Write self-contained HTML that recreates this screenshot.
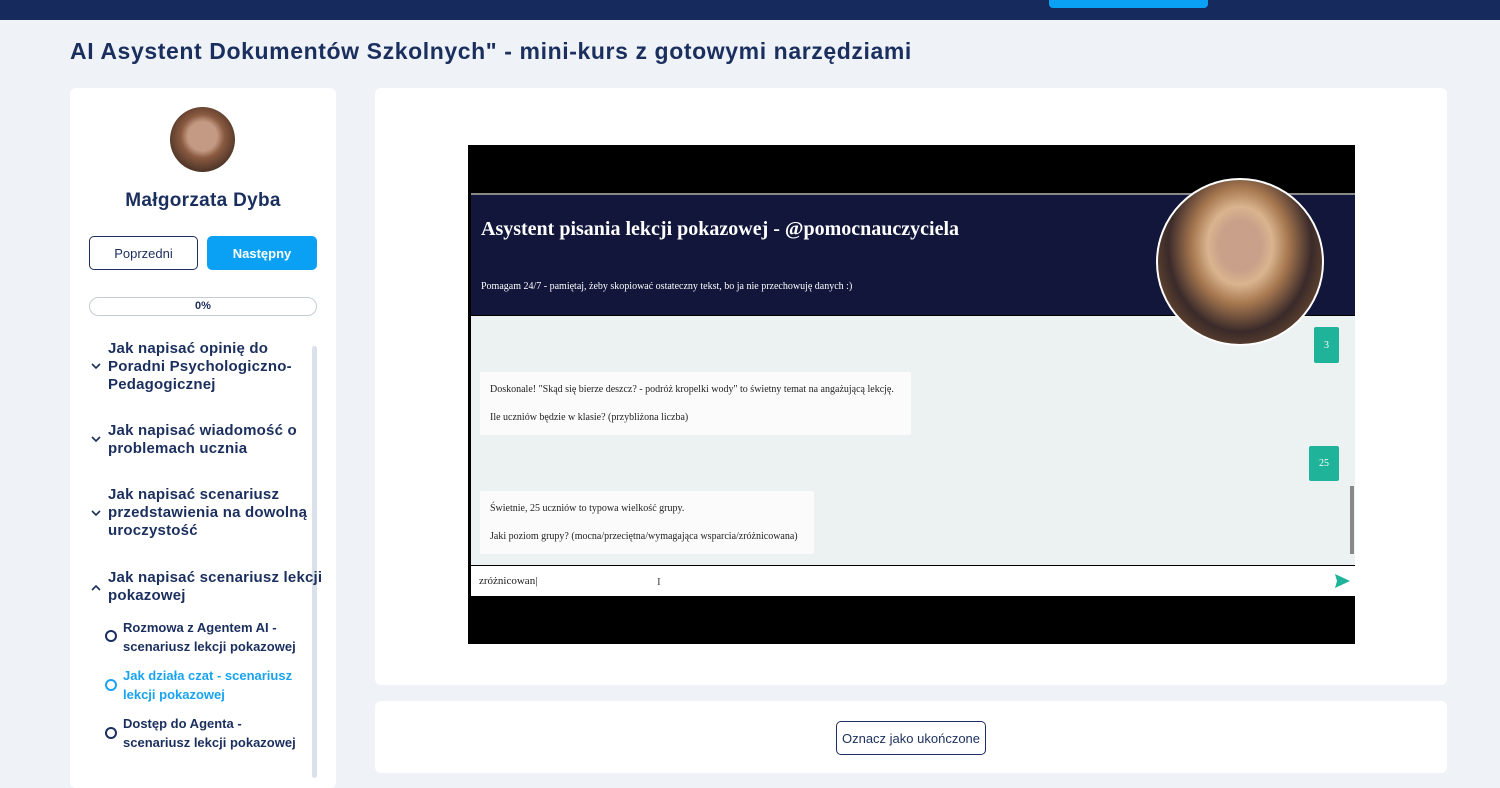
<!DOCTYPE html>
<html><head><meta charset="utf-8"><style>
*{box-sizing:border-box;margin:0;padding:0}
body{width:1500px;height:780px;overflow:hidden;background:#eff3f8;font-family:"Liberation Sans",sans-serif;color:#1b2f5e;position:relative}
.abs{position:absolute}
.top{left:0;top:0;width:1500px;height:20px;background:#172a5e}
.topbtn{left:1049px;top:0;width:159px;height:8px;background:#0aa1f5;border-radius:0 0 4px 4px}
h1{position:absolute;left:70px;top:38px;font-size:23px;font-weight:bold;color:#1b2f5e;letter-spacing:0.6px;white-space:nowrap}
.card{background:#fff;border-radius:6px}
.btn{position:absolute;height:34px;border-radius:5px;font-size:13px;display:flex;align-items:center;justify-content:center}
.item{position:absolute;left:108px;font-size:15px;font-weight:bold;line-height:18px;color:#1b2f5e;letter-spacing:0.2px;white-space:nowrap}
.chev{position:absolute;left:91px}
.sub{position:absolute;left:123px;font-size:13px;font-weight:bold;line-height:19px;color:#1b2f5e;white-space:nowrap}
.circ{position:absolute;left:105px;width:12px;height:12px;border:2px solid #1b2f5e;border-radius:50%}
.serif{font-family:"Liberation Serif",serif}
.msg{position:absolute;background:#fbfbfb;font-size:10px;color:#222;padding:0 10px;border-radius:2px;white-space:nowrap}
.um{position:absolute;background:#1fb39a;color:#fff;font-size:10px;display:flex;align-items:center;justify-content:center;border-radius:2px}
</style></head><body>
<div class="abs top"></div><div class="abs topbtn"></div>
<h1>AI Asystent Dokumentów Szkolnych" - mini-kurs z gotowymi narzędziami</h1>

<div class="abs card" style="left:70px;top:88px;width:266px;height:700px"></div>
<div class="abs" style="left:170px;top:107px;width:65px;height:65px;border-radius:50%;background:radial-gradient(circle at 50% 45%,#c49a84 0 30%,#8a5a40 45%,#4a3226 75%)"></div>
<div class="abs" style="left:70px;top:190px;width:266px;text-align:center;font-size:19px;font-weight:bold;letter-spacing:0.3px">Małgorzata Dyba</div>
<div class="btn" style="left:89px;top:236px;width:109px;border:1.5px solid #1b2f5e;color:#1b2f5e">Poprzedni</div>
<div class="btn" style="left:207px;top:236px;width:110px;background:#0aa1f5;color:#fff;font-weight:bold">Następny</div>
<div class="abs" style="left:89px;top:297px;width:228px;height:19px;border:1.5px solid #c6ccd6;border-radius:10px;font-size:11px;font-weight:bold;text-align:center;line-height:16px">0%</div>
<div class="abs" style="left:312px;top:346px;width:5px;height:432px;background:#dbe1ea;border-radius:3px"></div>

<svg width="0" height="0" style="position:absolute"><defs><path id="dn" d="M1 1L5 5L9 1" fill="none" stroke="#1b2f5e" stroke-width="1.6"/></defs></svg>
<div class="item" style="top:340px">Jak napisać opinię do<br>Poradni Psychologiczno-<br>Pedagogicznej</div><svg class="chev" style="top:363px" width="10" height="7"><use href="#dn"/></svg>
<div class="item" style="top:422px">Jak napisać wiadomość o<br>problemach ucznia</div><svg class="chev" style="top:436px" width="10" height="7"><use href="#dn"/></svg>
<div class="item" style="top:486px">Jak napisać scenariusz<br>przedstawienia na dowolną<br>uroczystość</div><svg class="chev" style="top:510px" width="10" height="7"><use href="#dn"/></svg>
<div class="item" style="top:569px">Jak napisać scenariusz lekcji<br>pokazowej</div><svg class="chev" style="top:584px" width="10" height="7"><path d="M1 6L5 2L9 6" fill="none" stroke="#1b2f5e" stroke-width="1.6"/></svg>
<div class="sub" style="top:618px">Rozmowa z Agentem AI -<br>scenariusz lekcji pokazowej</div><div class="circ" style="top:630px"></div>
<div class="sub" style="top:666px;color:#19a3f0">Jak działa czat - scenariusz<br>lekcji pokazowej</div><div class="circ" style="top:679px;border-color:#19a3f0"></div>
<div class="sub" style="top:714px">Dostęp do Agenta -<br>scenariusz lekcji pokazowej</div><div class="circ" style="top:727px"></div>

<div class="abs card" style="left:375px;top:88px;width:1072px;height:597px"></div>
<div class="abs card" style="left:375px;top:701px;width:1072px;height:72px"></div>
<div class="btn" style="left:836px;top:721px;width:150px;height:34px;border:1.5px solid #1b2f5e;color:#1b2f5e">Oznacz jako ukończone</div>

<div class="abs" style="left:468px;top:145px;width:887px;height:499px;background:#000"></div>
<div class="abs" style="left:471px;top:193px;width:884px;height:2px;background:#888"></div>
<div class="abs" style="left:471px;top:195px;width:884px;height:120px;background:#11163a"></div>
<div class="abs serif" style="left:481px;top:218px;font-size:20px;font-weight:bold;color:#fff">Asystent pisania lekcji pokazowej - @pomocnauczyciela</div>
<div class="abs serif" style="left:481px;top:281px;font-size:10px;color:#fff">Pomagam 24/7 - pamiętaj, żeby skopiować ostateczny tekst, bo ja nie przechowuję danych :)</div>
<div class="abs" style="left:471px;top:316px;width:884px;height:249px;background:#ecf1f1"></div>
<div class="abs" style="left:1350px;top:486px;width:4px;height:68px;background:#888"></div>
<div class="um serif" style="left:1314px;top:327px;width:25px;height:36px">3</div>
<div class="msg serif" style="left:480px;top:372px;width:431px;height:63px;line-height:14px;padding-top:11px">Doskonale! "Skąd się bierze deszcz? - podróż kropelki wody" to świetny temat na angażującą lekcję.<br><br>Ile uczniów będzie w klasie? (przybliżona liczba)</div>
<div class="um serif" style="left:1309px;top:446px;width:30px;height:35px">25</div>
<div class="msg serif" style="left:480px;top:491px;width:334px;height:63px;line-height:14px;padding-top:11px">Świetnie, 25 uczniów to typowa wielkość grupy.<br><br>Jaki poziom grupy? (mocna/przeciętna/wymagająca wsparcia/zróżnicowana)</div>
<div class="abs" style="left:471px;top:566px;width:884px;height:30px;background:#fff"></div>
<div class="abs serif" style="left:479px;top:575px;font-size:11px;color:#222">zróżnicowan|</div>
<div class="abs serif" style="left:657px;top:576px;font-size:11px;color:#444">I</div>
<svg class="abs" style="left:1335px;top:574px" width="15" height="14" viewBox="0 0 15 14"><path d="M0 0L15 7L0 14L2 7Z" fill="#1fb39a"/></svg>
<div class="abs" style="left:1156px;top:178px;width:168px;height:168px;border-radius:50%;border:2px solid #fff;background:radial-gradient(ellipse at 50% 40%,#c9a08a 0 18%,#d9b48e 28%,#a6774f 42%,#3a2a2a 62%,#6b4a30 80%)"></div>
</body></html>
